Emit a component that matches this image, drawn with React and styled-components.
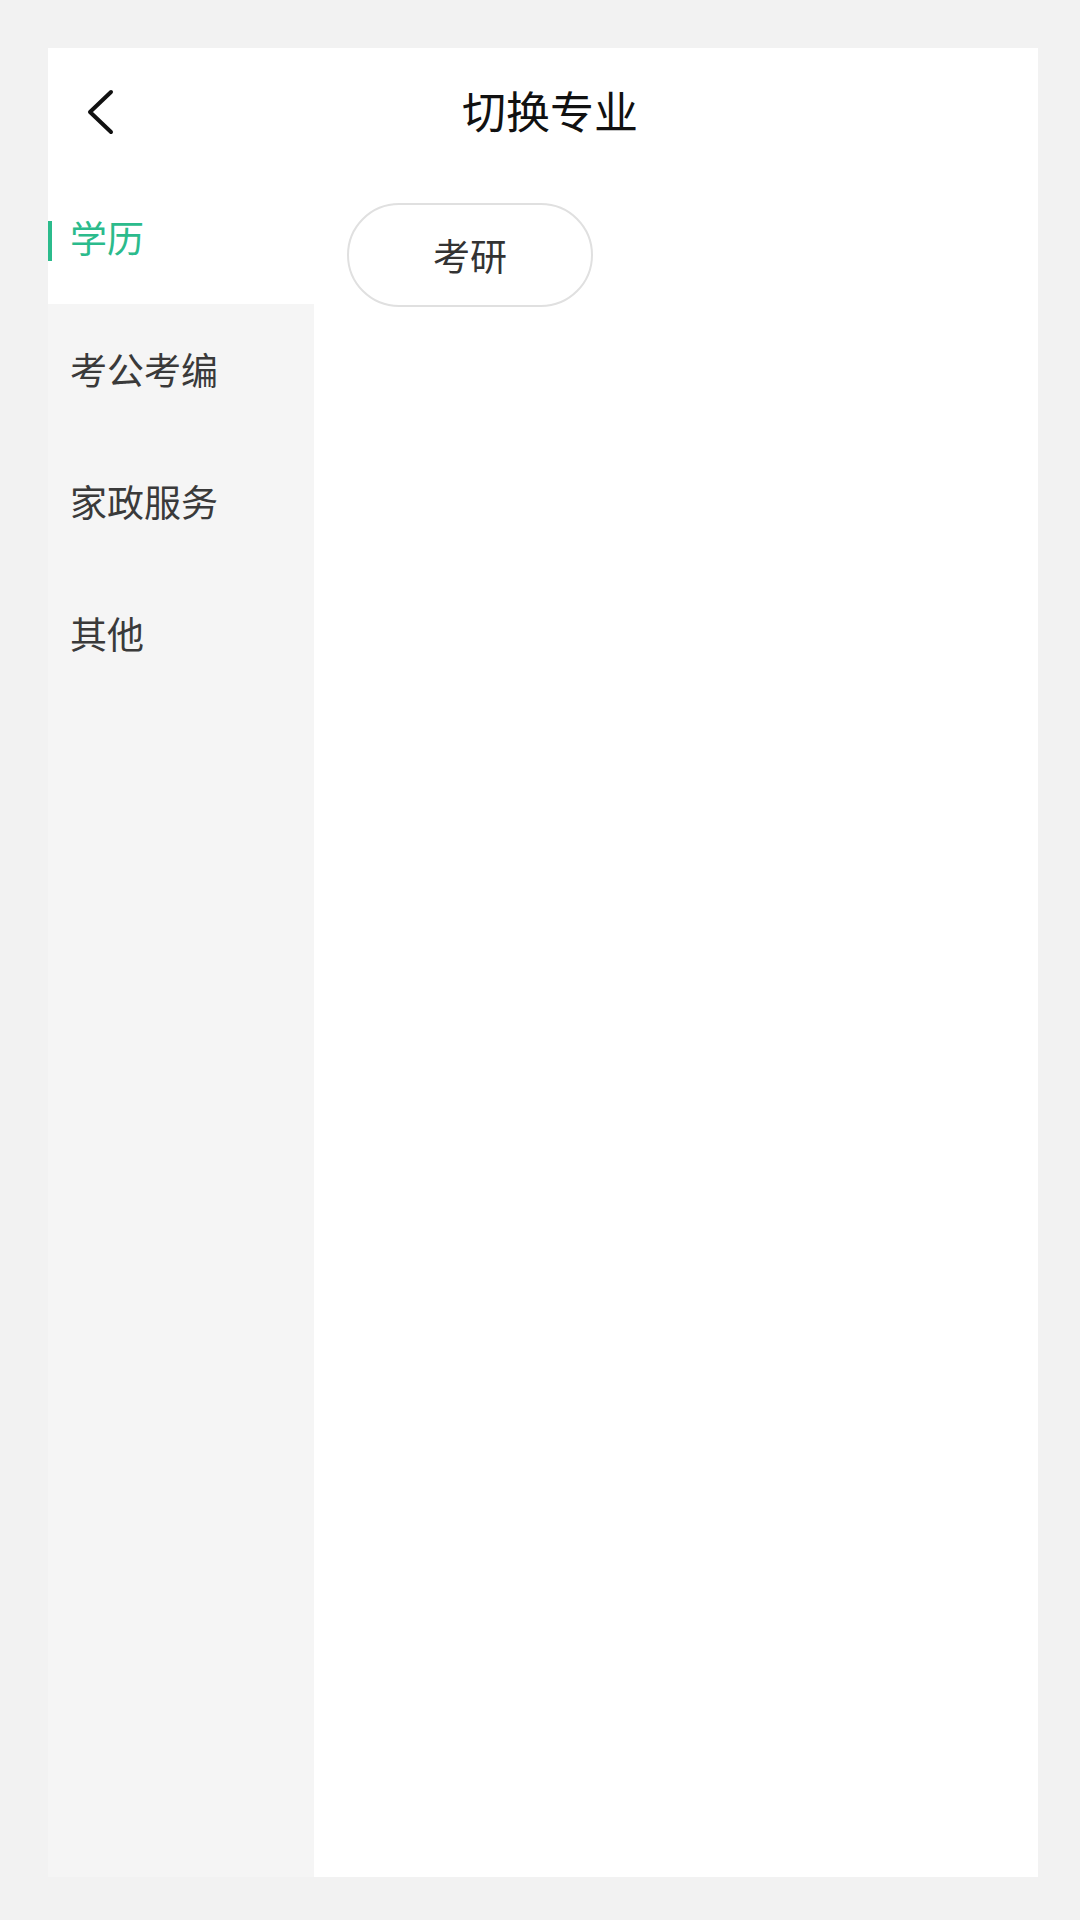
import React, { useState } from 'react'
import styled, { createGlobalStyle } from 'styled-components'

const GlobalStyle = createGlobalStyle`
  html, body {
    margin: 0;
    padding: 0;
    background: #f2f2f2;
  }
  body {
    font-family: "Noto Sans CJK SC", "Noto Sans", sans-serif;
  }
`

const categories = [
  { name: '学历', majors: ['考研'] },
  { name: '考公考编', majors: [] },
  { name: '家政服务', majors: [] },
  { name: '其他', majors: [] },
]

function App() {
  const [active, setActive] = useState(0)

  return (
    <Page>
      <GlobalStyle />
      <Panel>
        <Header>
          <BackButton aria-label="返回">
            <svg width="30" height="48" viewBox="0 0 30 48" fill="none">
              <path
                d="M25 4 L4 24 L25 44"
                stroke="#111"
                strokeWidth="4"
                strokeLinecap="round"
                strokeLinejoin="round"
              />
            </svg>
          </BackButton>
          <Title>切换专业</Title>
        </Header>
        <Body>
          <SideBar>
            {categories.map((c, i) => (
              <SideItem key={c.name} $active={i === active} onClick={() => setActive(i)}>
                <Indicator $active={i === active} />
                {c.name}
              </SideItem>
            ))}
            <SideFill />
          </SideBar>
          <Content>
            {categories[active].majors.map((m) => (
              <MajorButton key={m}>{m}</MajorButton>
            ))}
          </Content>
        </Body>
      </Panel>
    </Page>
  )
}

const Page = styled.div`
  width: 1080px;
  height: 1920px;
  box-sizing: border-box;
  padding: 48px 42px 43px 48px;
  display: flex;
`

const Panel = styled.div`
  flex: 1;
  background: #fff;
  display: flex;
  flex-direction: column;
`

const Header = styled.div`
  height: 124px;
  box-sizing: border-box;
  padding: 4px 74px 0 38px;
  display: flex;
  align-items: center;
`

const BackButton = styled.div`
  width: 50px;
  height: 48px;
  display: flex;
  align-items: center;
`

const Title = styled.div`
  flex: 1;
  text-align: center;
  font-size: 44px;
  color: #111;
  line-height: 1;
  padding-bottom: 4px;
`

const Body = styled.div`
  flex: 1;
  display: flex;
`

const SideBar = styled.div`
  width: 266px;
  background: #f5f5f5;
  display: flex;
  flex-direction: column;
`

const SideItem = styled.div`
  height: 132px;
  padding-bottom: 3px;
  box-sizing: border-box;
  display: flex;
  align-items: center;
  gap: 18px;
  font-size: 37px;
  color: ${(p) => (p.$active ? '#2bbb8c' : '#3a3a3a')};
  background: ${(p) => (p.$active ? '#fff' : 'transparent')};
  cursor: pointer;
`

const Indicator = styled.span`
  width: 4px;
  height: 40px;
  margin-top: 8px;
  background: ${(p) => (p.$active ? '#2bbb8c' : 'transparent')};
`

const SideFill = styled.div`
  flex: 1;
`

const Content = styled.div`
  flex: 1;
  padding: 31px 33px;
  display: flex;
  flex-wrap: wrap;
  align-content: flex-start;
  gap: 24px;
`

const MajorButton = styled.div`
  width: 246px;
  height: 104px;
  box-sizing: border-box;
  border: 2px solid #e0e0e0;
  border-radius: 52px;
  display: flex;
  align-items: center;
  justify-content: center;
  font-size: 37px;
  color: #333;
`

export default App
